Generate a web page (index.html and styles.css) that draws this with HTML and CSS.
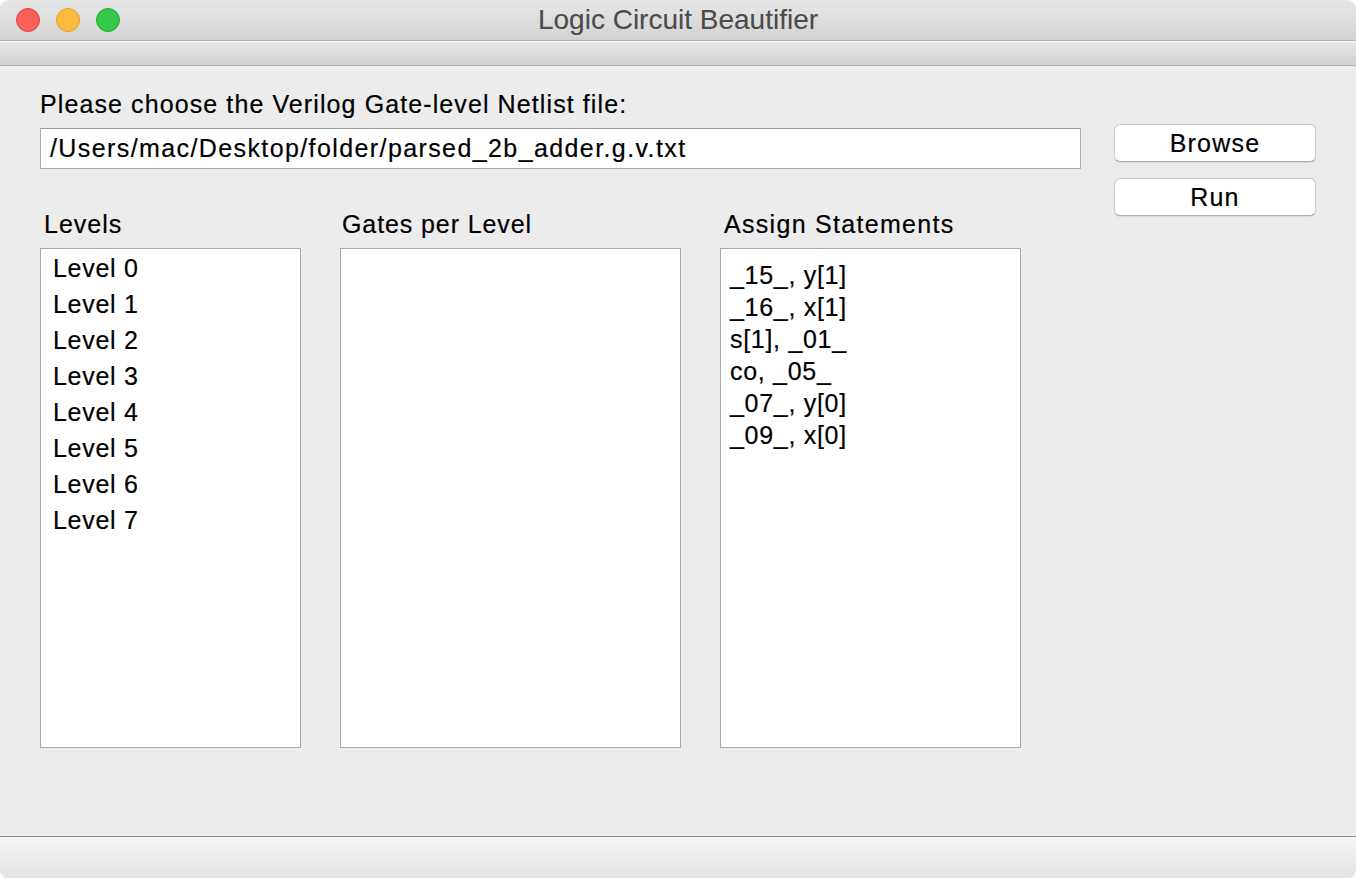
FILE: index.html
```html
<!DOCTYPE html>
<html>
<head>
<meta charset="utf-8">
<title>Logic Circuit Beautifier</title>
<link rel="stylesheet" href="styles.css">
</head>
<body>
<div class="window">
  <div class="titlebar">
    <div class="lights">
      <span class="light red"></span>
      <span class="light yellow"></span>
      <span class="light green"></span>
    </div>
    <div class="title">Logic Circuit Beautifier</div>
  </div>
  <div class="toolbar"></div>
  <div class="content">
    <div class="main-grid">
      <div class="file-area">
        <div class="prompt">Please choose the Verilog Gate-level Netlist file:</div>
        <div class="path-field">/Users/mac/Desktop/folder/parsed_2b_adder.g.v.txt</div>
      </div>
      <div class="buttons">
        <button class="btn">Browse</button>
        <button class="btn">Run</button>
      </div>
      <div class="columns">
        <div class="col col-levels">
          <div class="col-label">Levels</div>
          <ul class="listbox levels">
            <li>Level 0</li>
            <li>Level 1</li>
            <li>Level 2</li>
            <li>Level 3</li>
            <li>Level 4</li>
            <li>Level 5</li>
            <li>Level 6</li>
            <li>Level 7</li>
          </ul>
        </div>
        <div class="col col-gates">
          <div class="col-label">Gates per Level</div>
          <ul class="listbox gates"></ul>
        </div>
        <div class="col col-assign">
          <div class="col-label">Assign Statements</div>
          <ul class="listbox assign">
            <li>_15_, y[1]</li>
            <li>_16_, x[1]</li>
            <li>s[1], _01_</li>
            <li>co, _05_</li>
            <li>_07_, y[0]</li>
            <li>_09_, x[0]</li>
          </ul>
        </div>
      </div>
    </div>
  </div>
  <div class="bottombar"></div>
</div>
</body>
</html>
```

FILE: styles.css
```css
* {
  box-sizing: border-box;
}

html, body {
  margin: 0;
  padding: 0;
  background: #ffffff;
}

body {
  font-family: "Liberation Sans", Arial, Helvetica, sans-serif;
  color: #000;
  -webkit-text-stroke: 0.2px #000;
}

.window {
  width: 1356px;
  height: 878px;
  display: flex;
  flex-direction: column;
  background: #ececec;
  border-radius: 9px 9px 8px 8px;
  overflow: hidden;
}

.titlebar {
  position: relative;
  height: 41px;
  flex: none;
  background: linear-gradient(#e8e7e8, #d3d2d3);
  border-bottom: 1px solid #b1b1b1;
}

.lights {
  position: absolute;
  left: 16px;
  top: 8px;
  display: flex;
  gap: 16px;
}

.light {
  width: 24px;
  height: 24px;
  border-radius: 50%;
  display: block;
}

.red {
  background: #fc605c;
  border: 1px solid #e0443e;
}

.yellow {
  background: #fdbc40;
  border: 1px solid #dea123;
}

.green {
  background: #34c84a;
  border: 1px solid #1dac2c;
}

.title {
  text-align: center;
  font-size: 28px;
  line-height: 40px;
  color: #4b4b4b;
  -webkit-text-stroke: 0.1px #4b4b4b;
}

.toolbar {
  height: 25px;
  flex: none;
  border-top: 1px solid #f7f7f7;
  border-bottom: 1px solid #acacac;
  background: linear-gradient(#e7e7e7, #d1d1d1);
}

.content {
  flex: 1;
  padding: 24px 0 0 40px;
}

.main-grid {
  display: grid;
  grid-template-columns: 1041px 202px;
  column-gap: 33px;
  row-gap: 41px;
  align-items: start;
}

.file-area {
  grid-column: 1;
  grid-row: 1;
}

.prompt {
  font-size: 25px;
  line-height: 28px;
  letter-spacing: 1.1px;
  margin-bottom: 10px;
}

.path-field {
  height: 41px;
  background: #ffffff;
  border: 1px solid #acacac;
  border-top-color: #9c9c9c;
  font-size: 25px;
  line-height: 39px;
  letter-spacing: 1.4px;
  padding-left: 9px;
  white-space: nowrap;
}

.buttons {
  grid-column: 2;
  grid-row: 1 / span 2;
  padding-top: 34px;
  display: flex;
  flex-direction: column;
  gap: 16px;
}

.btn {
  height: 38px;
  width: 202px;
  background: #ffffff;
  border: 1px solid #c9c9c9;
  border-bottom-color: #adadad;
  border-radius: 6px;
  box-shadow: 0 1px 1px rgba(0, 0, 0, 0.08);
  font-family: "Liberation Sans", Arial, Helvetica, sans-serif;
  font-size: 25px;
  line-height: 36px;
  letter-spacing: 1.2px;
  color: #000;
  -webkit-text-stroke: 0.2px #000;
  padding: 0;
  text-align: center;
}

.columns {
  grid-column: 1;
  grid-row: 2;
  display: flex;
  gap: 39px;
}

.col-levels {
  width: 261px;
}

.col-gates {
  width: 341px;
}

.col-assign {
  width: 301px;
}

.col-label {
  font-size: 25px;
  line-height: 28px;
  letter-spacing: 1px;
  padding-left: 4px;
  margin-bottom: 10px;
}

.col-gates .col-label {
  padding-left: 2px;
  letter-spacing: 0.9px;
}

.col-assign .col-label {
  letter-spacing: 1.3px;
}

.listbox {
  list-style: none;
  margin: 0;
  height: 500px;
  background: #ffffff;
  border: 1px solid #a9a9a9;
  font-size: 25px;
  letter-spacing: 0.7px;
}

.levels {
  padding: 1px 0 0 12px;
  line-height: 36px;
}

.gates {
  padding: 0;
}

.assign {
  padding: 10px 0 0 9px;
  line-height: 32px;
}

.bottombar {
  height: 42px;
  flex: none;
  border-top: 1px solid #8e8e8e;
  background: linear-gradient(#f6f6f6, #e3e3e3);
}
```
